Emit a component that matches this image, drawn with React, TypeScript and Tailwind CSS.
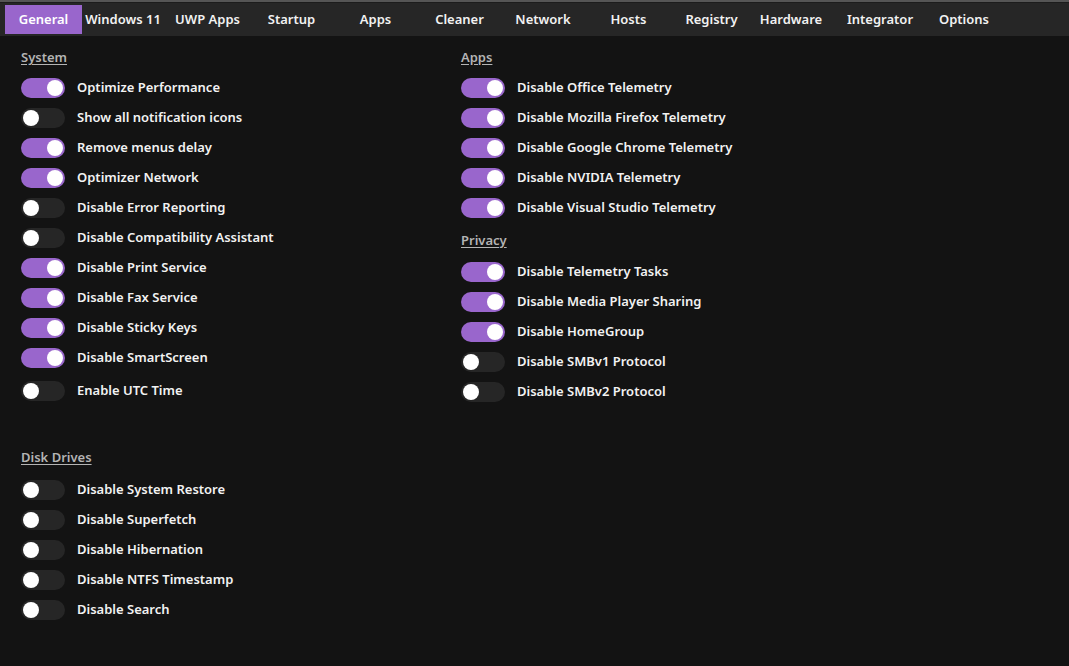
import { useState } from "react";

type Tab = { label: string; w: string };

const tabs: Tab[] = [
  { label: "General", w: "w-[77px]" },
  { label: "Windows 11", w: "w-[82px]" },
  { label: "UWP Apps", w: "w-[87px]" },
  { label: "Startup", w: "w-[81px]" },
  { label: "Apps", w: "w-[87px]" },
  { label: "Cleaner", w: "w-[81px]" },
  { label: "Network", w: "w-[86px]" },
  { label: "Hosts", w: "w-[85px]" },
  { label: "Registry", w: "w-[81px]" },
  { label: "Hardware", w: "w-[78px]" },
  { label: "Integrator", w: "w-[100px]" },
  { label: "Options", w: "w-[68px]" },
];

type Opt = [string, boolean];

const system: Opt[] = [
  ["Optimize Performance", true],
  ["Show all notification icons", false],
  ["Remove menus delay", true],
  ["Optimizer Network", true],
  ["Disable Error Reporting", false],
  ["Disable Compatibility Assistant", false],
  ["Disable Print Service", true],
  ["Disable Fax Service", true],
  ["Disable Sticky Keys", true],
  ["Disable SmartScreen", true],
];

const disk: Opt[] = [
  ["Disable System Restore", false],
  ["Disable Superfetch", false],
  ["Disable Hibernation", false],
  ["Disable NTFS Timestamp", false],
  ["Disable Search", false],
];

const apps: Opt[] = [
  ["Disable Office Telemetry", true],
  ["Disable Mozilla Firefox Telemetry", true],
  ["Disable Google Chrome Telemetry", true],
  ["Disable NVIDIA Telemetry", true],
  ["Disable Visual Studio Telemetry", true],
];

const privacy: Opt[] = [
  ["Disable Telemetry Tasks", true],
  ["Disable Media Player Sharing", true],
  ["Disable HomeGroup", true],
  ["Disable SMBv1 Protocol", false],
  ["Disable SMBv2 Protocol", false],
];

function Toggle({ label, initial }: { label: string; initial: boolean }) {
  const [on, setOn] = useState(initial);
  return (
    <button
      type="button"
      onClick={() => setOn(!on)}
      className="h-[30px] flex items-center gap-3 text-left"
    >
      <span
        className={`w-11 h-5 rounded-full flex items-center px-[2px] ${
          on ? "bg-[#9966cc] justify-end" : "bg-[#262626] justify-start"
        }`}
      >
        <span className="w-4 h-4 rounded-full bg-white" />
      </span>
      <span className="text-[13px] font-semibold text-[#f2f2f2]">{label}</span>
    </button>
  );
}

function Header({ children, className = "" }: { children: string; className?: string }) {
  return (
    <div className={`h-[30px] flex items-center ${className}`}>
      <span className="text-[13px] font-semibold text-[#b4b4b4] underline underline-offset-2">
        {children}
      </span>
    </div>
  );
}

export default function App() {
  const [active, setActive] = useState("General");
  return (
    <div className="w-[1069px] h-[666px] bg-[#131313] overflow-hidden font-['Noto_Sans',sans-serif] text-white">
      <div className="h-[3px] bg-[#1c1c1c] border-t-2 border-[#555]" />
      <div className="h-[33px] bg-[#262626] flex items-stretch pl-[5px] pt-[2px] pb-[2px]">
        {tabs.map((t) => (
          <button
            key={t.label}
            type="button"
            onClick={() => setActive(t.label)}
            className={`${t.w} shrink-0 text-center text-[13px] font-semibold ${
              active === t.label ? "bg-[#9966cc] text-white" : "text-[#f2f2f2]"
            }`}
          >
            {t.label}
          </button>
        ))}
      </div>

      <div className="flex pt-[7px]">
        <div className="w-[439px] pl-[21px] flex flex-col items-start">
          <Header>System</Header>
          {system.map(([l, v]) => (
            <Toggle key={l} label={l} initial={v} />
          ))}
          <div className="mt-[3px]">
            <Toggle label="Enable UTC Time" initial={false} />
          </div>
          <Header className="mt-[37px]">Disk Drives</Header>
          <div className="mt-[2px] flex flex-col items-start">
            {disk.map(([l, v]) => (
              <Toggle key={l} label={l} initial={v} />
            ))}
          </div>
        </div>

        <div className="flex-1 pl-[22px] flex flex-col items-start">
          <Header>Apps</Header>
          {apps.map(([l, v]) => (
            <Toggle key={l} label={l} initial={v} />
          ))}
          <Header className="mt-[3px]">Privacy</Header>
          <div className="mt-[1px] flex flex-col items-start">
            {privacy.map(([l, v]) => (
              <Toggle key={l} label={l} initial={v} />
            ))}
          </div>
        </div>
      </div>
    </div>
  );
}
